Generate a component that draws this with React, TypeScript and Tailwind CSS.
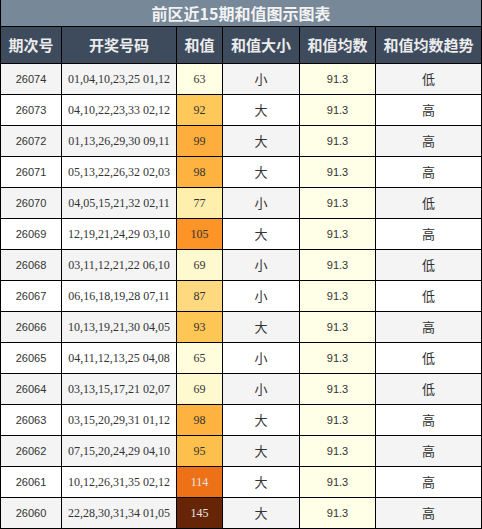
import React from "react";

type Row = { no: string; nums: string; sum: number; bg: string; light?: boolean; size: string; trend: string };

const rows: Row[] = [
  { no: "26074", nums: "01,04,10,23,25 01,12", sum: 63, bg: "bg-[#ffffe3]", size: "小", trend: "低" },
  { no: "26073", nums: "04,10,22,23,33 02,12", sum: 92, bg: "bg-[#fec95a]", size: "大", trend: "高" },
  { no: "26072", nums: "01,13,26,29,30 09,11", sum: 99, bg: "bg-[#feae3c]", size: "大", trend: "高" },
  { no: "26071", nums: "05,13,22,26,32 02,03", sum: 98, bg: "bg-[#feb240]", size: "大", trend: "高" },
  { no: "26070", nums: "04,05,15,21,32 02,11", sum: 77, bg: "bg-[#ffefad]", size: "小", trend: "低" },
  { no: "26069", nums: "12,19,21,24,29 03,10", sum: 105, bg: "bg-[#fd9428]", size: "大", trend: "高" },
  { no: "26068", nums: "03,11,12,21,22 06,10", sum: 69, bg: "bg-[#fff9d0]", size: "小", trend: "低" },
  { no: "26067", nums: "06,16,18,19,28 07,11", sum: 87, bg: "bg-[#fed980]", size: "小", trend: "低" },
  { no: "26066", nums: "10,13,19,21,30 04,05", sum: 93, bg: "bg-[#fec654]", size: "大", trend: "高" },
  { no: "26065", nums: "04,11,12,13,25 04,08", sum: 65, bg: "bg-[#fffddc]", size: "小", trend: "低" },
  { no: "26064", nums: "03,13,15,17,21 02,07", sum: 69, bg: "bg-[#fff9d0]", size: "小", trend: "低" },
  { no: "26063", nums: "03,15,20,29,31 01,12", sum: 98, bg: "bg-[#feb240]", size: "大", trend: "高" },
  { no: "26062", nums: "07,15,20,24,29 04,10", sum: 95, bg: "bg-[#fec04c]", size: "大", trend: "高" },
  { no: "26061", nums: "10,12,26,31,35 02,12", sum: 114, bg: "bg-[#ec7117]", light: true, size: "大", trend: "高" },
  { no: "26060", nums: "22,28,30,31,34 01,05", sum: 145, bg: "bg-[#662506]", light: true, size: "大", trend: "高" },
];

const cjk = "font-['Noto_Sans_CJK_SC','Noto_Sans',sans-serif]";
const sans = "font-['Liberation_Sans',Arial,sans-serif]";
const serif = "font-['Liberation_Serif','Times_New_Roman',serif]";

export default function App() {
  return (
    <div className="w-[482px] bg-black px-px pb-px">
      <div className="grid grid-cols-[60px_114px_45px_76px_75px_105px] gap-px">
        <div className={`col-span-6 h-[26px] bg-[#778899] flex items-center justify-center text-[16px] font-bold text-[#f2f2f2] ${cjk}`}>
          前区近15期和值图示图表
        </div>
        {["期次号", "开奖号码", "和值", "和值大小", "和值均数", "和值均数趋势"].map((h) => (
          <div
            key={h}
            className={`h-[36px] bg-[#3e4b5d] flex items-center justify-center text-[15px] font-bold text-[#ececec] ${cjk}`}
          >
            {h}
          </div>
        ))}
        {rows.map((r, i) => {
          const rowBg = i % 2 === 0 ? "bg-[#f4f4f4]" : "bg-white";
          return (
            <React.Fragment key={r.no}>
              <div className={`h-[30px] ${rowBg} flex items-center justify-center text-[11px] text-[#333] ${sans}`}>{r.no}</div>
              <div className={`h-[30px] ${rowBg} flex items-center justify-center text-[12px] text-[#333] ${serif}`}>{r.nums}</div>
              <div
                className={`h-[30px] ${r.bg} flex items-center justify-center text-[12px] ${serif} ${
                  r.light ? "text-[#e6e6e6]" : "text-[#333]"
                }`}
              >
                {r.sum}
              </div>
              <div className={`h-[30px] ${rowBg} flex items-center justify-center text-[13px] text-[#333] ${cjk}`}>{r.size}</div>
              <div className={`h-[30px] bg-[#fffee6] flex items-center justify-center text-[11px] text-[#333] ${sans}`}>91.3</div>
              <div className={`h-[30px] ${rowBg} flex items-center justify-center text-[13px] text-[#333] ${cjk}`}>{r.trend}</div>
            </React.Fragment>
          );
        })}
      </div>
    </div>
  );
}
